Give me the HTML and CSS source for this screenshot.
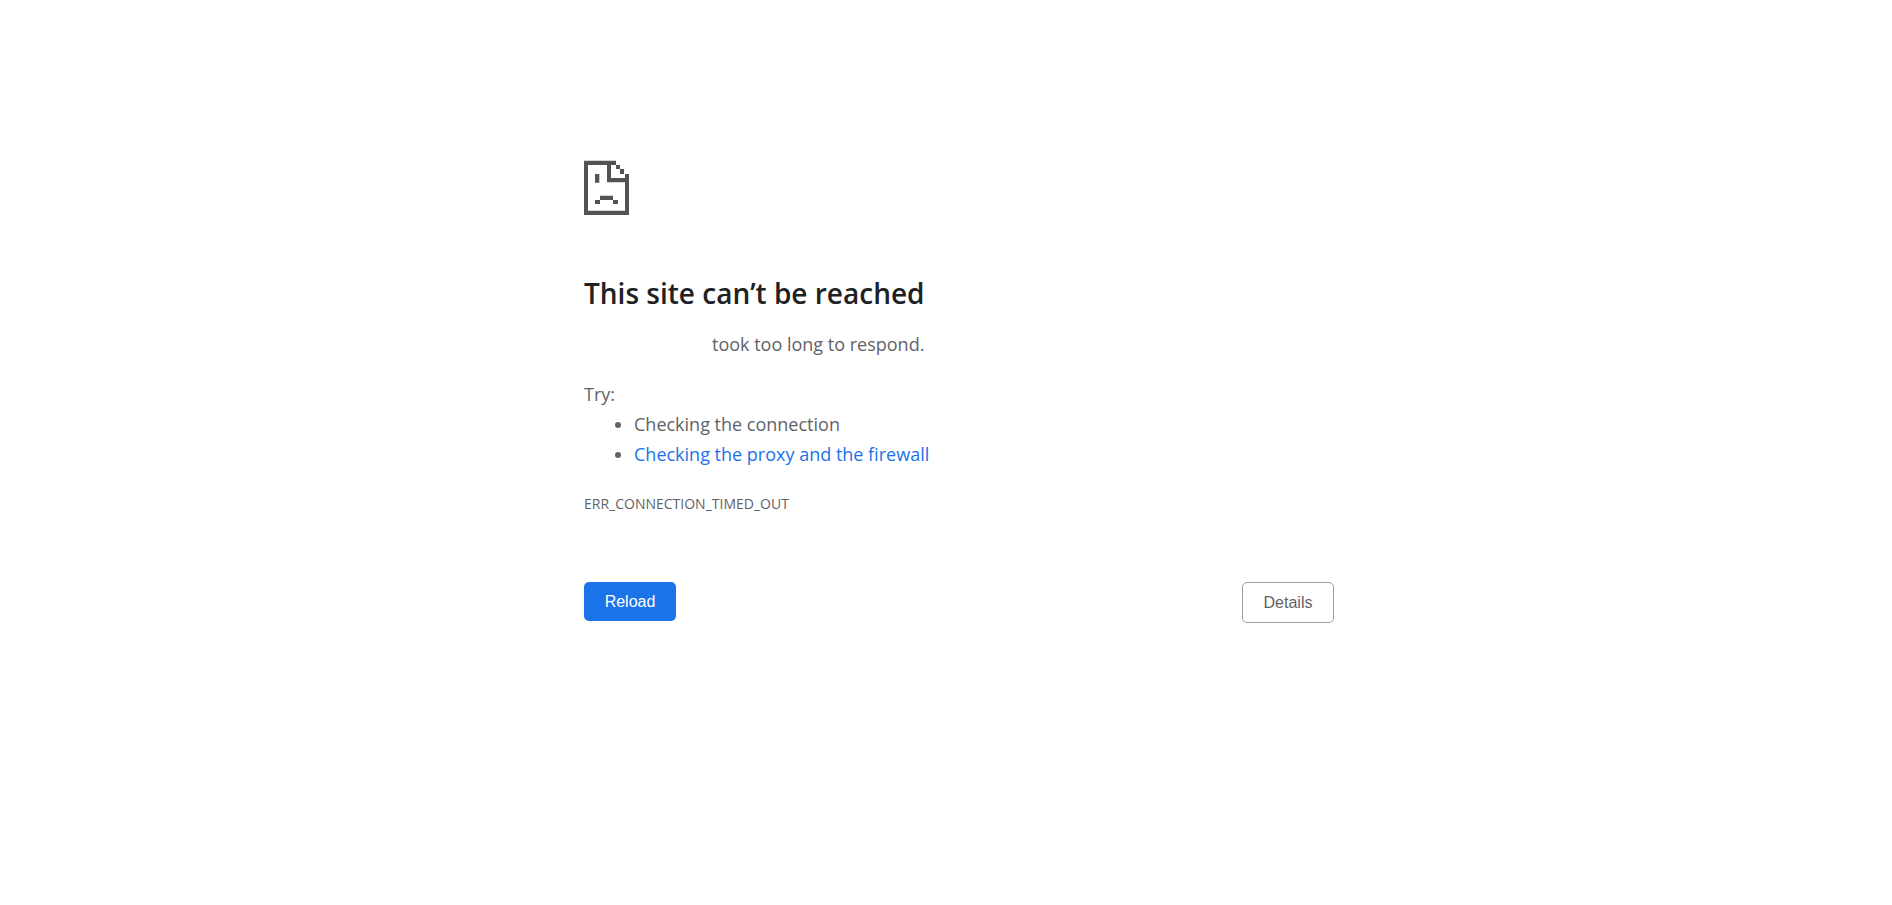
FILE: index.html
```html
<!DOCTYPE html>
<html lang="en">
<head>
    <meta charset="UTF-8">
    <meta name="viewport" content="width=device-width, initial-scale=1.0">
    <title>This site can’t be reached</title>
    <link rel="stylesheet" href="styles.css">
</head>
<body>

    <main class="wrapper">
        <svg class="icon" viewBox="0 0 135 165" aria-hidden="true">
            <!-- Page outline with folded corner -->
            <path d="M0 2H96V15H81V54H123V42H135V165H0ZM12 15V152H123V67H69V15Z" fill-rule="evenodd"/>
            <path d="M96 15H108V27H96ZM108 27H120V42H108Z"/>
            <!-- Sad face -->
            <path d="M33 42H46V68H33ZM48 107H87V120H48ZM33 120H48V132H33ZM87 120H102V132H87Z"/>
        </svg>

        <h1>This site can’t be reached</h1>

        <p class="summary">took too long to respond.</p>

        <div class="suggestions">
            <p>Try:</p>
            <ul>
                <li>Checking the connection</li>
                <li><a href="#buttons">Checking the proxy and the firewall</a></li>
            </ul>
        </div>

        <div class="error-code">ERR_CONNECTION_TIMED_OUT</div>

        <div class="buttons" id="buttons">
            <button type="button" class="reload">Reload</button>
            <button type="button" class="details">Details</button>
        </div>
    </main>

</body>
</html>
```

FILE: styles.css
```css
body {
    margin: 0;
    padding-left: 26px;
    background-color: #fff;
    color: #5f6368;
    font-family: "Segoe UI", "Open Sans", sans-serif;
    font-size: 18px;
    line-height: 30px;
}
.wrapper {
    max-width: 750px;
    margin: 0 auto;
    padding-top: 160px;
}
.icon {
    display: block;
    width: 45px;
    height: 55px;
    fill: #535353;
}
h1 {
    margin: 60px 0 18px;
    color: #202124;
    font-size: 28px;
    font-weight: 600;
    line-height: 36px;
}
p {
    margin: 0;
}
.summary {
    padding-left: 128px;
}
.suggestions {
    margin-top: 20px;
}
ul {
    margin: 0;
    padding-left: 50px;
}
a {
    color: #1a73e8;
    text-decoration: none;
}
.error-code {
    margin-top: 20px;
    font-size: 14px;
}
.buttons {
    display: flex;
    justify-content: space-between;
    align-items: flex-start;
    margin-top: 63px;
}
button {
    min-width: 92px;
    padding: 10px 16px;
    border: none;
    border-radius: 5px;
    font-family: Arial, "Liberation Sans", sans-serif;
    font-size: 16px;
    line-height: 19px;
    cursor: pointer;
}
.reload {
    background-color: #1a73e8;
    color: #fff;
}
.details {
    border: 1px solid #9aa0a6;
    background-color: #fff;
    color: #5f6368;
}
```
